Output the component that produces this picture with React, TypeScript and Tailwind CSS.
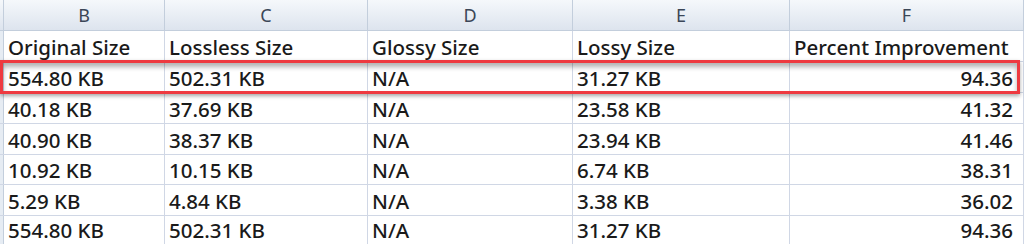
import React from 'react';

const columns = ['B', 'C', 'D', 'E', 'F'];

const headings = ['Original Size', 'Lossless Size', 'Glossy Size', 'Lossy Size', 'Percent Improvement'];

const rows = [
  ['554.80 KB', '502.31 KB', 'N/A', '31.27 KB', '94.36'],
  ['40.18 KB', '37.69 KB', 'N/A', '23.58 KB', '41.32'],
  ['40.90 KB', '38.37 KB', 'N/A', '23.94 KB', '41.46'],
  ['10.92 KB', '10.15 KB', 'N/A', '6.74 KB', '38.31'],
  ['5.29 KB', '4.84 KB', 'N/A', '3.38 KB', '36.02'],
  ['554.80 KB', '502.31 KB', 'N/A', '31.27 KB', '94.36'],
];

// row heights (border included), tuned to the sheet's uneven pixel rows; last one is cut by the window
const rowHeights = ['h-[31px]', 'h-[31px]', 'h-[31px]', 'h-[30px]', 'h-[31px]', 'h-[28px]'];

const gridCols = 'grid grid-cols-[4px_161px_203px_205px_217px_1fr]';
const cellBase = 'flex items-end pb-[2px] px-[4px] border-r border-[#d0d7e5] text-[20.5px] leading-[24px] font-medium whitespace-nowrap';

const App: React.FC = () => {
  return (
    <div
      className="relative w-[1024px] h-[244px] overflow-hidden bg-white text-[#1a1a1a]"
      style={{ fontFamily: '"Noto Sans", "Open Sans", sans-serif' }}
    >
      {/* Column letters */}
      <div className={`${gridCols} h-[31px] bg-gradient-to-b from-[#f5f8fb] to-[#dde4ee] border-b border-[#c3cedc]`}>
        <div className="border-r border-[#c3cedc]" />
        {columns.map((c) => (
          <div
            key={c}
            className="flex items-center justify-center border-r border-[#c3cedc] text-[18px] leading-[24px] text-[#3b4657]"
          >
            {c}
          </div>
        ))}
      </div>

      {/* Heading row */}
      <div className={`${gridCols} h-[31px] border-b border-[#d0d7e5]`}>
        <div className="border-r border-[#c3cedc] bg-[#e6ecf3]" />
        {headings.map((h) => (
          <div key={h} className={cellBase}>
            {h}
          </div>
        ))}
      </div>

      {/* Data rows */}
      {rows.map((row, i) => (
        <div
          key={i}
          className={`${gridCols} ${rowHeights[i]} ${i < rows.length - 1 ? 'border-b border-[#d0d7e5]' : ''}`}
        >
          <div className="border-r border-[#c3cedc] bg-[#e6ecf3]" />
          {row.map((cell, j) => (
            <div key={j} className={`${cellBase} ${j === 4 ? 'justify-end pr-[10px]' : ''}`}>
              {cell}
            </div>
          ))}
        </div>
      ))}

      {/* Highlight box */}
      <div className="absolute left-0 top-[60px] w-[1020px] h-[34px] border-[3px] border-[#ee3a40] shadow-[inset_0_4px_5px_rgba(0,0,0,0.3),0_2px_4px_rgba(0,0,0,0.35)]" />
    </div>
  );
};

export default App;
